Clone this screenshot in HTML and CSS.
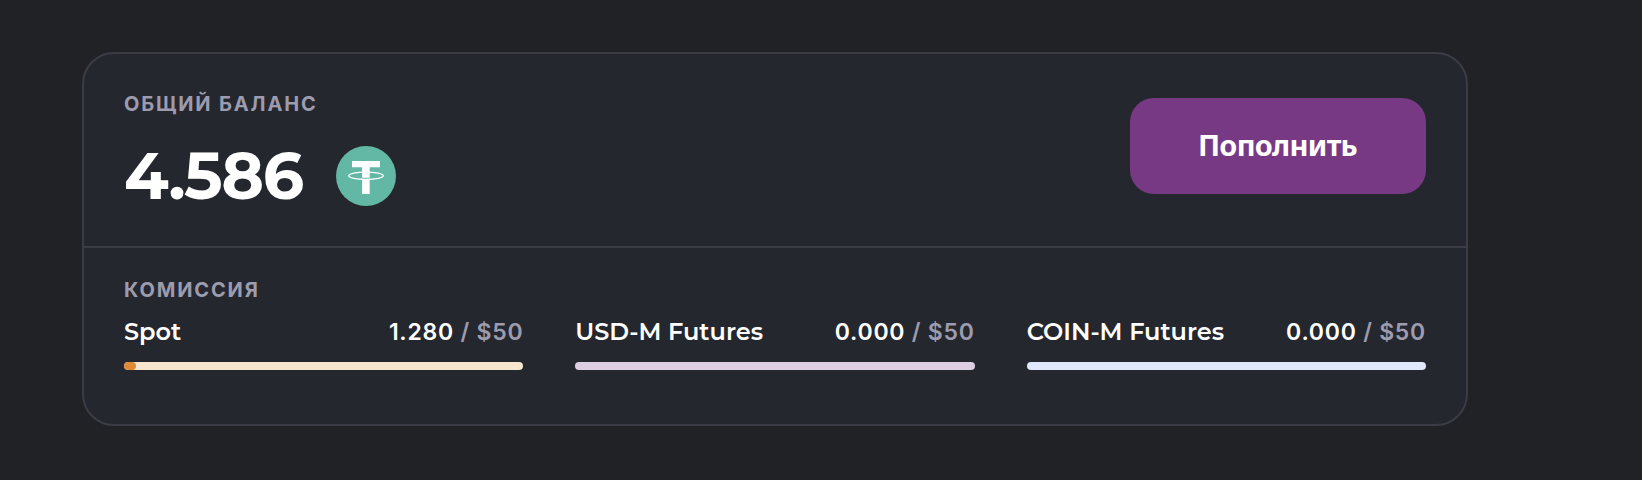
FILE: index.html
```html
<!DOCTYPE html>
<html lang="ru">
<head>
  <meta charset="UTF-8" />
  <title>Баланс</title>
  <meta name="viewport" content="width=device-width, initial-scale=1.0" />
  <link rel="stylesheet" href="styles.css">
</head>
<body>
  <div class="card">
    <div class="balance">
      <div>
        <div class="label">ОБЩИЙ БАЛАНС</div>
        <div class="amount">
          <span class="amount-value">4.586</span>
          <svg class="tether" viewBox="0 0 60 60">
            <circle cx="30" cy="30" r="30" fill="#63b7a5" />
            <path d="M16 15h28v6.300H33.700v10.400h-7.600V21.300H16zM26.100 33.700h7.600V48h-7.600z" fill="#fff" />
            <ellipse cx="30" cy="29.800" rx="17.300" ry="3.700" fill="none" stroke="#fff" stroke-width="1.300" />
          </svg>
        </div>
      </div>
      <button class="topup">Пополнить</button>
    </div>

    <div class="fees">
      <div class="label">КОМИССИЯ</div>
      <div class="fee-list">
        <div class="fee">
          <div class="fee-row">
            <span class="fee-name">Spot</span>
            <span class="fee-value">1.280 <span class="muted">/ $50</span></span>
          </div>
          <div class="bar spot"><div class="bar-fill" style="width: 3%"></div></div>
        </div>
        <div class="fee">
          <div class="fee-row">
            <span class="fee-name">USD-M Futures</span>
            <span class="fee-value">0.000 <span class="muted">/ $50</span></span>
          </div>
          <div class="bar usd"></div>
        </div>
        <div class="fee">
          <div class="fee-row">
            <span class="fee-name">COIN-M Futures</span>
            <span class="fee-value">0.000 <span class="muted">/ $50</span></span>
          </div>
          <div class="bar coin"></div>
        </div>
      </div>
    </div>
  </div>
</body>
</html>
```
FILE: styles.css
```css
* {
  box-sizing: border-box;
}

body {
  margin: 0;
  padding: 52px 174px 0 82px;
  background: #212226;
  color: #fff;
  font-family: Montserrat, Inter, sans-serif;
}

.card {
  height: 374px;
  background: #25272e;
  border: 2px solid #3b3c46;
  border-radius: 32px;
}

.balance {
  display: flex;
  justify-content: space-between;
  align-items: flex-start;
  height: 194px;
  padding: 38px 40px 0;
  border-bottom: 2px solid #3b3c46;
}

.label {
  color: #9c9cae;
  font-family: Inter, sans-serif;
  font-size: 20px;
  font-weight: 700;
  line-height: 24px;
  letter-spacing: 1.85px;
}

.amount {
  display: flex;
  align-items: center;
  gap: 32px;
  margin-top: 30px;
}

.amount-value {
  width: 180px;
  font-size: 65px;
  font-weight: 700;
  line-height: 60px;
  letter-spacing: -1.5px;
}

.tether {
  width: 60px;
  height: 60px;
}

.topup {
  width: 296px;
  height: 96px;
  margin-top: 6px;
  padding: 0 1px 4px 0;
  border: none;
  border-radius: 24px;
  background: #783984;
  color: #fff;
  font-family: "Noto Sans", sans-serif;
  font-size: 29px;
  font-weight: 700;
  letter-spacing: -0.7px;
}

.fees {
  padding: 30px 40px 0;
}

.fee-list {
  display: grid;
  grid-template-columns: repeat(3, 1fr);
  gap: 52px;
  margin-top: 16px;
}

.fee-row {
  display: flex;
  justify-content: space-between;
  line-height: 28px;
  white-space: nowrap;
}

.fee-name {
  font-size: 24px;
  font-weight: 600;
}

.fee-value {
  font-family: Inter, sans-serif;
  font-size: 23px;
  font-weight: 600;
  letter-spacing: 0.75px;
}

.muted {
  color: #9c9cae;
}

.bar {
  height: 8px;
  margin-top: 16px;
  border-radius: 4px;
  overflow: hidden;
}

.bar-fill {
  height: 100%;
  border-radius: 4px;
  background: #e08935;
}

.spot {
  background: #f7e6d0;
}

.usd {
  background: #dfcde1;
}

.coin {
  background: #e1e8fc;
}
```
